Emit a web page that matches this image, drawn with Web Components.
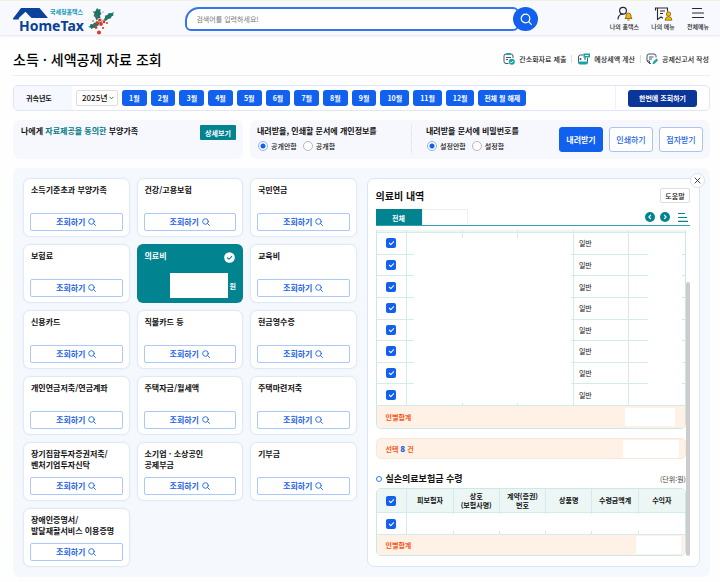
<!DOCTYPE html>
<html lang="ko">
<head>
<meta charset="utf-8">
<meta name="viewport" content="width=device-width, initial-scale=1">
<title>소득 · 세액공제 자료 조회</title>
<style>
  body {
    margin: 0;
    background: #fefefe;
    color: #111;
    font: 7px/10px "Noto Sans CJK KR", sans-serif;
    --blue: #1160ee;
    --teal: #018490;
    --orange: #f4591a;
    --peach: #fff1e6;
  }
</style>
</head>
<body>
<tax-page></tax-page>

<script>
const BASE = `
  :host { display: block; box-sizing: border-box; }
  *, *::before, *::after { box-sizing: border-box; }
  button, select, input { font: inherit; color: inherit; margin: 0; }
  button { display: inline-flex; align-items: center; justify-content: center; padding: 0; border: 0; background: none; cursor: pointer; white-space: nowrap; }
  a { color: inherit; text-decoration: none; }
  h1, h2, h3, p { margin: 0; }
  svg { display: block; flex: none; }
`;

function define(name, css, html) {
  const template = document.createElement('template');
  template.innerHTML = `<style>${BASE}${css}</style>${html}`;
  customElements.define(name, class extends HTMLElement {
    constructor() {
      super();
      this.attachShadow({ mode: 'open' }).append(template.content.cloneNode(true));
    }
  });
}

define('site-logo', `
  a { display: block; }
  .name { font: 700 14px "Noto Sans", sans-serif; fill: #0b3f94; }
  .sub { font: 700 6px "Noto Sans CJK KR", sans-serif; fill: #1597b4; }
`, `
  <a href="#" aria-label="국세청홈택스 HomeTax">
    <svg width="104" height="36" viewBox="0 0 104 36">
      <path d="M0 18.500 8 8h18.500l8.500 10H18.500L12.500 11.800 5.800 18v1.500H0z" fill="#0b429b"/>
      <text class="name" x="6" y="31">HomeTax</text>
      <text class="sub" x="37" y="14">국세청홈택스</text>
      <g fill="#1c7668">
        <path d="M84 8l1.500 1.500 2-.500-.200 3 1.200 1.500-1.500 2 .500 2.500-2.500.500-1.500 2-1.500-3.500-1.500-1 1-2-1-2 2-1z"/>
        <path d="M101 12l-1 2 .500 1.500-2 1-.800 2-2.200.200-2 1.800-3 .500 1.500-3.500.200-2 2.300-.500 1.200-2 2.300.300z"/>
        <path d="M75 27l2-1 .500-2 2.200.200 1.800-1.700 2 .500 3-1-1 3.500-2 .800-.500 2-2.500-.500-2 1.200-1.300-1.500z"/>
      </g>
      <path d="M80 11l7 12 7-6M86 22l-6 4" fill="none" stroke="#875f45" stroke-width=".7"/>
      <g fill="#e33726">
        <circle cx="87" cy="20" r="1.600"/><circle cx="84" cy="22.500" r="1.500"/><circle cx="88" cy="24" r="1.900"/>
        <circle cx="91" cy="22" r="1.300"/><circle cx="83" cy="27.500" r="1.400"/><circle cx="86" cy="32.500" r="2"/>
        <circle cx="90" cy="28" r="1.100"/><circle cx="94" cy="23" r="1"/><circle cx="80" cy="21" r=".8"/><circle cx="90" cy="12" r=".6"/>
      </g>
    </svg>
  </a>
`);

define('search-field', `
  form { display: flex; height: 24px; }
  input { flex: 1; min-width: 0; height: 24px; padding: 0 9px; margin-right: -6px; border: 2px solid #3474ee; border-radius: 14px 6px 6px 6px; background: #fff; outline: 0; }
  input::placeholder { color: #777; opacity: 1; }
  button { width: 25px; height: 24px; border-radius: 50%; background: var(--blue); z-index: 1; }
`, `
  <form role="search">
    <input type="search" placeholder="검색어를 입력하세요!" aria-label="검색어">
    <button type="button" aria-label="검색">
      <svg width="12" height="12" viewBox="0 0 12 12" fill="none" stroke="#fff" stroke-width="1.200" stroke-linecap="round"><circle cx="5.500" cy="5.500" r="4.300"/><path d="M8.700 8.700l2.600 2.600"/></svg>
    </button>
  </form>
`);

define('header-link', `
  a { display: flex; flex-direction: column; align-items: center; gap: 1px; font-size: 6px; line-height: 10px; font-weight: 500; color: #222; white-space: nowrap; }
`, `<a href="#"><slot name="icon"></slot><span><slot></slot></span></a>`);

define('site-header', `
  :host { border-top: 1px solid #f0f3de; border-bottom: 1px solid #eaedf5; background: #f7f9ff; box-shadow: 0 1px 2px #f5f5f5; }
  header { display: grid; grid-template-columns: 172px minmax(0, 353px) auto; justify-content: space-between; height: 34px; padding: 0 11px 0 13px; }
  site-logo { margin-top: -1px; }
  search-field { align-self: center; }
  nav { display: flex; gap: 12px; padding-top: 5px; margin-left: 71px; }
`, `
  <header>
    <site-logo></site-logo>
    <search-field></search-field>
    <nav aria-label="사용자 메뉴">
      <header-link>
        <svg slot="icon" width="18" height="15" viewBox="0 0 18 15" fill="none" stroke="#26282e" stroke-width="1.200"><circle cx="8" cy="4.800" r="3.400"/><path d="M3 13c.300-3 2-5 5-5M3 13" stroke-linecap="round"/><path d="M10 12.500l1-1.500V9.500q.300-2.500 2.500-2.500T16 9.500V11l1 1.500z" fill="#f6b800" stroke="#5c4500" stroke-width=".7"/><path d="M12.300 14h2.400" stroke="#b68900"/></svg>
        나의 홈택스
      </header-link>
      <header-link>
        <svg slot="icon" width="20" height="15" viewBox="0 0 20 15" fill="none" stroke="#26282e" stroke-width="1.100"><path d="M4.500 2v11.500L8 11l2 1.300M2.500 4.500V2h12v3.500M7 5h5M7 7.500h3"/><circle cx="15.500" cy="8" r="2.200" fill="#f6b800" stroke="#5c4500" stroke-width=".6"/><path d="M12 14.200q.300-3.700 3.500-3.700T19 14.200z" fill="#f6b800" stroke="#5c4500" stroke-width=".6"/></svg>
        나의 메뉴
      </header-link>
      <header-link>
        <svg slot="icon" width="14" height="15" viewBox="0 0 14 15" stroke="#26282e" stroke-width="1.200" stroke-linecap="round"><path d="M1.500 2.500h9M1.500 7h11M1.500 11.500h11"/></svg>
        전체메뉴
      </header-link>
    </nav>
  </header>
`);

define('quick-link', `
  a { display: flex; align-items: center; gap: 4px; font-weight: 500; color: #222; white-space: nowrap; }
`, `<a href="#"><slot name="icon"></slot><slot></slot></a>`);

define('page-heading', `
  :host { display: flex; align-items: center; justify-content: space-between; height: 40px; padding: 7px 1px 0 0; border-bottom: 1px solid #eee; }
  h1 { font-size: 14px; line-height: 20px; font-weight: 500; color: #000; white-space: nowrap; }
  nav { display: flex; align-items: center; gap: 5px; }
  i { width: 1px; height: 8px; background: #ddd; }
  svg { fill: none; stroke: #465466; stroke-width: 1; }
`, `
  <h1>소득 · 세액공제 자료 조회</h1>
  <nav aria-label="바로가기">
    <quick-link>
      <svg slot="icon" width="12" height="12" viewBox="0 0 12 12"><path d="M5.500 10.500H3a2 2 0 0 1-2-2V3a2 2 0 0 1 2-2h5a2 2 0 0 1 2 2v2M3 4.500h5M3 6.500h2"/><path d="M3.500 0h4v2h-4z" fill="#16a5a5" stroke="none"/><circle cx="8.800" cy="8.800" r="3" fill="#16a5a5" stroke="none"/><path d="M7.300 8.800l1.100 1.100 1.900-2" stroke="#fff"/></svg>
      간소화자료 제출
    </quick-link>
    <i></i>
    <quick-link>
      <svg slot="icon" width="13" height="12" viewBox="0 0 13 12"><path d="M10.500 5v3.500a2 2 0 0 1-2 2h-5a2 2 0 0 1-2-2V4a2 2 0 0 1 2-2h3M3.500 5v2M2.500 6h2M7 6h2"/><path d="M1 8.500h10v1a2 2 0 0 1-2 2H3a2 2 0 0 1-2-2zM6.500.500H13v4H9L7.500 5.800V4.500h-1z" fill="#16a5a5" stroke="none"/><path d="M8 2.500h3.500" stroke="#fff"/></svg>
      예상세액 계산
    </quick-link>
    <i></i>
    <quick-link>
      <svg slot="icon" width="12" height="12" viewBox="0 0 12 12"><path d="M5 10.500H3.500L1 8V3a2 2 0 0 1 2-2h5a2 2 0 0 1 2 2v1.500M3 4h4.500M3 6h3M1 8h2.500v2.500"/><path d="M6.500 11.300l.5-2.300 3.500-3.500 1.500 1.800-3.500 3.500z" fill="#16a5a5" stroke="none"/></svg>
      공제신고서 작성
    </quick-link>
  </nav>
`);

define('month-toggle', `
  :host { flex: 25 1 0; min-width: 0; }
  :host([wide]) { flex-grow: 29; }
  :host([all]) { flex-grow: 48; }
  button { width: 100%; height: 16px; border-radius: 3px; background: var(--blue); color: #fff; font-weight: 700; }
`, `<button type="button"><slot></slot></button>`);

define('period-bar', `
  :host { display: flex; align-items: stretch; height: 26px; border: 1px solid #dfe7f6; border-radius: 5px; background: #fff; overflow: hidden; }
  label { display: flex; align-items: center; flex: 0 0 58px; padding-left: 12px; background: #f5f8ff; font-weight: 700; }
  .year { position: relative; align-self: center; flex: 0 0 42px; margin: 0 4px; }
  select { appearance: none; width: 100%; height: 16px; padding: 0 0 0 5px; border: 1px solid #ddd; border-radius: 2px; background: #fff; font-size: 8px; font-weight: 500; }
  .year svg { position: absolute; right: 4px; top: 6px; pointer-events: none; }
  .months { display: flex; flex: 0 1 404px; align-items: center; gap: 4px; }
  .run { display: flex; align-items: center; margin-left: auto; padding: 0 12px; border-left: 1px solid #eef2fa; }
  .run button { width: 69px; height: 17px; border-radius: 3px; background: #0b3598; color: #fff; font-weight: 700; }
`, `
  <label for="year">귀속년도</label>
  <div class="year">
    <select id="year"><option>2025년</option></select>
    <svg width="5" height="4" viewBox="0 0 5 4" fill="none" stroke="#555" stroke-width=".9"><path d="M.500.800l2 2 2-2"/></svg>
  </div>
  <div class="months">
    <month-toggle>1월</month-toggle><month-toggle>2월</month-toggle><month-toggle>3월</month-toggle>
    <month-toggle>4월</month-toggle><month-toggle>5월</month-toggle><month-toggle>6월</month-toggle>
    <month-toggle>7월</month-toggle><month-toggle>8월</month-toggle><month-toggle>9월</month-toggle>
    <month-toggle wide>10월</month-toggle><month-toggle wide>11월</month-toggle><month-toggle wide>12월</month-toggle>
    <month-toggle all>전체 월 해제</month-toggle>
  </div>
  <div class="run"><button type="button">한번에 조회하기</button></div>
`);

define('radio-pair', `
  fieldset { margin: 0; padding: 0; border: 0; min-width: 0; }
  legend { padding: 0; font-size: 8px; line-height: 12px; font-weight: 700; white-space: nowrap; }
  div { display: flex; gap: 6px; margin-top: 4px; padding-left: 1px; }
  label { display: flex; align-items: center; gap: 3px; font-weight: 500; white-space: nowrap; }
  input { appearance: none; width: 10px; height: 10px; border: 1px solid #b8b8b8; border-radius: 50%; background: #fff; }
  input:checked { border-color: #8fb0f2; background: radial-gradient(circle, var(--blue) 2px, #fff 3px); }
`, `
  <fieldset>
    <legend><slot name="title"></slot></legend>
    <div>
      <label><input type="radio" name="choice" checked><slot name="off"></slot></label>
      <label><input type="radio" name="choice"><slot name="on"></slot></label>
    </div>
  </fieldset>
`);

define('option-row', `
  :host { display: grid; grid-template-columns: 1fr 2fr; gap: 7px; }
  section { display: flex; height: 39px; padding: 5px 7px; border-radius: 7px; background: #f6f8fd; }
  .consent { justify-content: space-between; }
  h2 { padding-left: 1px; font-size: 8px; line-height: 12px; font-weight: 700; white-space: nowrap; }
  em { font-style: normal; color: #047a85; }
  .detail { width: 36px; height: 15px; border-radius: 1px; background: var(--teal); color: #fff; font-weight: 700; }
  .output { justify-content: space-between; }
  radio-pair:nth-child(1) { flex: 0 0 155px; border-right: 1px dotted #d8dde6; }
  radio-pair:nth-child(2) { padding-left: 14px; flex: 1; }
  .actions { display: flex; gap: 6px; padding-top: 2px; }
  .actions button { width: 44px; height: 25px; border: 1px solid #a9c4f8; border-radius: 3px; background: #fff; color: #1c64e8; font-size: 8px; font-weight: 500; }
  .actions .primary { background: var(--blue); border-color: var(--blue); color: #fff; font-weight: 700; }
`, `
  <section class="consent">
    <h2>나에게 <em>자료제공을 동의한</em> 부양가족</h2>
    <button class="detail" type="button">상세보기</button>
  </section>
  <section class="output">
    <radio-pair><span slot="title">내려받을, 인쇄할 문서에 개인정보를</span><span slot="off">공개안함</span><span slot="on">공개함</span></radio-pair>
    <radio-pair><span slot="title">내려받을 문서에 비밀번호를</span><span slot="off">설정안함</span><span slot="on">설정함</span></radio-pair>
    <div class="actions">
      <button class="primary" type="button">내려받기</button>
      <button type="button">인쇄하기</button>
      <button type="button">점자받기</button>
    </div>
  </section>
`);

define('deduction-card', `
  :host { display: flex; flex-direction: column; justify-content: space-between; height: 59px; padding: 5px 6px; border: 1px solid #e0e9f6; border-radius: 7px; background: #fff; box-shadow: 0 0 2px #e8eff9; }
  h3 { padding-left: 1px; font-size: 8px; line-height: 11px; font-weight: 700; white-space: nowrap; }
  button { width: 100%; height: 18px; gap: 3px; border: 1px solid #aac8fa; border-radius: 2px; background: #fff; color: #1c63e8; font-size: 8px; font-weight: 700; }
`, `
  <h3><slot></slot></h3>
  <button type="button">조회하기
    <svg width="8" height="8" viewBox="0 0 8 8" fill="none" stroke="currentColor" stroke-width=".9" stroke-linecap="round"><circle cx="3.500" cy="3.500" r="2.800"/><path d="M5.700 5.700l1.800 1.800"/></svg>
  </button>
`);

define('selected-card', `
  :host { display: flex; flex-direction: column; justify-content: space-between; height: 59px; padding: 6px 7px 5px 8px; border-radius: 6px; background: var(--teal); color: #fff; font-size: 8px; font-weight: 700; }
  div { display: flex; justify-content: space-between; line-height: 12px; }
  .amount { justify-content: flex-end; align-items: center; gap: 2px; font-size: 7px; }
  h3 { font-size: 8px; font-weight: 700; }
  .value { width: 58px; height: 25px; background: #fff; }
`, `
  <div><h3><slot></slot></h3>
    <svg width="13" height="13" viewBox="0 0 13 13"><circle cx="6.500" cy="7.500" r="5.300" fill="#fff"/><path d="M4.200 7.500l1.800 1.800 3-3.200" fill="none" stroke="#018490" stroke-width="1.100"/></svg>
  </div>
  <div class="amount"><span class="value"></span>원</div>
`);

define('card-grid', `
  :host { display: grid; grid-template-columns: repeat(3, minmax(0, 1fr)); gap: 7px; align-content: start; }
`, `<slot></slot>`);

define('total-line', `
  :host { display: flex; align-items: center; justify-content: space-between; height: 100%; padding-left: 9px; color: var(--orange); font-weight: 700; line-height: 10px; text-align: left; }
`, `<span><slot></slot></span><slot name="value"></slot>`);

const row = `<tr><td><input type="checkbox" checked aria-label="행 선택"></td><td></td><td></td><td></td><td class="kind">일반</td><td></td></tr>`;

define('detail-panel', `
  :host { position: relative; padding: 9px 9px 9px 8px; border: 1px solid #d9e5f7; border-radius: 7px; background: #fff; }
  .close { position: absolute; top: -6px; right: -6px; width: 15px; height: 15px; border: 1px solid #d5e1f4; border-radius: 50%; background: #fff; }
  .top { display: flex; align-items: center; justify-content: space-between; height: 15px; }
  h2 { font-size: 10px; line-height: 15px; font-weight: 700; }
  .help { width: 30px; height: 15px; border: 1px solid #ddd; border-radius: 2px; background: #fff; font-weight: 500; }
  .tabs { display: flex; align-items: center; height: 17px; margin: 6px 0 4px; border-bottom: 1px solid #35a3ad; }
  .tab { width: 46px; height: 16px; border: 1px solid #eee; border-bottom: 0; background: #fff; }
  .tab.on { background: var(--teal); border-color: var(--teal); color: #fff; font-weight: 700; }
  .tools { display: flex; align-items: center; gap: 5px; margin-left: auto; }
  .scroll { display: grid; grid-template-columns: minmax(0, 1fr) 4px; }
  .track { padding-top: 52px; }
  .track i { display: block; height: 100%; border-radius: 2px; background: #ccc; }
  .sheet { position: relative; border: 1px solid #cbe7e8; border-radius: 0 0 5px 5px; overflow: hidden; }
  .sheet.first { border-top: 0; }
  .sheet.second { border-radius: 5px; }
  table { width: 100%; border-collapse: separate; border-spacing: 0; table-layout: fixed; }
  .first table { height: 198px; }
  td, th { padding: 0; border-right: 1px solid #d3ebec; border-bottom: 1px solid #d3ebec; text-align: center; vertical-align: middle; }
  tr > :last-child { border-right: 0; }
  tfoot td { background: var(--peach); border: 0; }
  th { background: #ebf6f5; font-weight: 700; line-height: 9px; }
  .first thead tr { height: 3px; }
  .first tfoot tr { height: 22px; }
  .first tfoot total-line { height: 22px; }
  .second thead tr { height: 24px; }
  .second tbody tr { height: 22px; }
  .second tfoot total-line { height: 20px; }
  td.kind { text-align: left; padding-left: 5px; }
  input { appearance: none; display: block; width: 10px; height: 10px; margin: 0 auto; border-radius: 2px; background: var(--blue); }
  input::after { content: ""; display: block; width: 5px; height: 3px; margin: 3px auto 0; border: solid #fff; border-width: 0 0 1px 1px; transform: rotate(-45deg); }
  .blank { position: absolute; background: #fff; }
  .first .blank { top: 8px; bottom: 25px; left: 12%; width: 51%; }
  .first .blank.end { left: 88%; width: 11%; }
  .second .blank { top: 25px; height: 17px; left: 11%; right: 0; }
  .box { display: block; width: 50px; height: 18px; margin-right: 10px; background: #fff; }
  .box.wide { width: 56px; margin-right: 6px; }
  .box.small { width: 45px; margin-right: 4px; }
  .picked { height: 21px; margin-top: 9px; border: 1px solid #fae7dc; border-radius: 5px; background: var(--peach); overflow: hidden; }
  b { color: #195fe0; font-size: 8px; }
  .sub { display: flex; align-items: center; gap: 4px; height: 18px; margin-top: 11px; }
  .sub::before { content: ""; width: 6px; height: 6px; border: 1px solid #3477f0; border-radius: 50%; }
  h3 { font-size: 9px; line-height: 14px; font-weight: 700; }
  .unit { margin-left: auto; color: #444; }
`, `
  <button class="close" type="button" aria-label="닫기"><svg width="7" height="7" viewBox="0 0 7 7" stroke="#333" stroke-width=".9"><path d="M.700.700l5.600 5.600M6.300.700L.700 6.300"/></svg></button>
  <div class="top"><h2>의료비 내역</h2><button class="help" type="button">도움말</button></div>
  <div class="tabs">
    <button class="tab on" type="button">전체</button><button class="tab" type="button" aria-label="개인별"></button>
    <div class="tools">
      <button type="button" aria-label="이전"><svg width="10" height="10" viewBox="0 0 10 10"><circle cx="5" cy="5" r="5" fill="#018490"/><path d="M5.800 3L3.900 5l1.900 2" fill="none" stroke="#fff" stroke-width="1.100"/></svg></button>
      <button type="button" aria-label="다음"><svg width="10" height="10" viewBox="0 0 10 10"><circle cx="5" cy="5" r="5" fill="#018490"/><path d="M4.200 3l1.900 2-1.900 2" fill="none" stroke="#fff" stroke-width="1.100"/></svg></button>
      <button type="button" aria-label="목록"><svg width="15" height="10" viewBox="0 0 15 10" stroke="#018490" stroke-width="1.200"><path d="M3 1.500h7M3 5.500h9M3 9.300h10"/></svg></button>
    </div>
  </div>
  <div class="scroll">
    <div>
      <div class="sheet first">
        <table>
          <colgroup><col style="width:10%"><col span="5" style="width:18%"></colgroup>
          <thead><tr><th></th><th></th><th></th><th></th><th></th><th></th></tr></thead>
          <tbody>${row.repeat(8)}</tbody>
          <tfoot><tr><td colspan="6"><total-line>인별합계<span class="box" slot="value"></span></total-line></td></tr></tfoot>
        </table>
        <div class="blank"></div><div class="blank end"></div>
      </div>
      <div class="picked"><total-line>선택 <b>8</b> 건<span class="box wide" slot="value"></span></total-line></div>
      <div class="sub"><h3>실손의료보험금 수령</h3><span class="unit">(단위:원)</span></div>
      <div class="sheet second">
        <table>
          <colgroup><col style="width:10%"><col span="6" style="width:15%"></colgroup>
          <thead><tr><th><input type="checkbox" checked aria-label="전체 선택"></th><th>피보험자</th><th>상호<br>(보험사명)</th><th>계약(증권)<br>번호</th><th>상품명</th><th>수령금액계</th><th>수익자</th></tr></thead>
          <tbody><tr><td><input type="checkbox" checked aria-label="행 선택"></td><td></td><td></td><td></td><td></td><td></td><td></td></tr></tbody>
          <tfoot><tr><td colspan="7"><total-line>인별합계<span class="box small" slot="value"></span></total-line></td></tr></tfoot>
        </table>
        <div class="blank"></div>
      </div>
    </div>
    <div class="track"><i></i></div>
  </div>
`);

define('tax-page', `
  main { padding: 0 10px 5px 13px; }
  period-bar { margin: 9px 0; }
  .workspace { display: grid; grid-template-columns: minmax(0, 1fr) minmax(0, 1fr); gap: 10px; margin-top: 9px; padding: 10px; border-radius: 7px; background: #f5f8fd; }
`, `
  <site-header></site-header>
  <main>
    <page-heading></page-heading>
    <period-bar></period-bar>
    <option-row></option-row>
    <div class="workspace">
      <card-grid>
        <deduction-card>소득기준초과 부양가족</deduction-card>
        <deduction-card>건강/고용보험</deduction-card>
        <deduction-card>국민연금</deduction-card>
        <deduction-card>보험료</deduction-card>
        <selected-card>의료비</selected-card>
        <deduction-card>교육비</deduction-card>
        <deduction-card>신용카드</deduction-card>
        <deduction-card>직불카드 등</deduction-card>
        <deduction-card>현금영수증</deduction-card>
        <deduction-card>개인연금저축/연금계좌</deduction-card>
        <deduction-card>주택자금/월세액</deduction-card>
        <deduction-card>주택마련저축</deduction-card>
        <deduction-card>장기집합투자증권저축/<br>벤처기업투자신탁</deduction-card>
        <deduction-card>소기업 · 소상공인<br>공제부금</deduction-card>
        <deduction-card>기부금</deduction-card>
        <deduction-card>장애인증명서/<br>발달재활서비스 이용증명</deduction-card>
      </card-grid>
      <detail-panel></detail-panel>
    </div>
  </main>
`);
</script>
</body>
</html>
